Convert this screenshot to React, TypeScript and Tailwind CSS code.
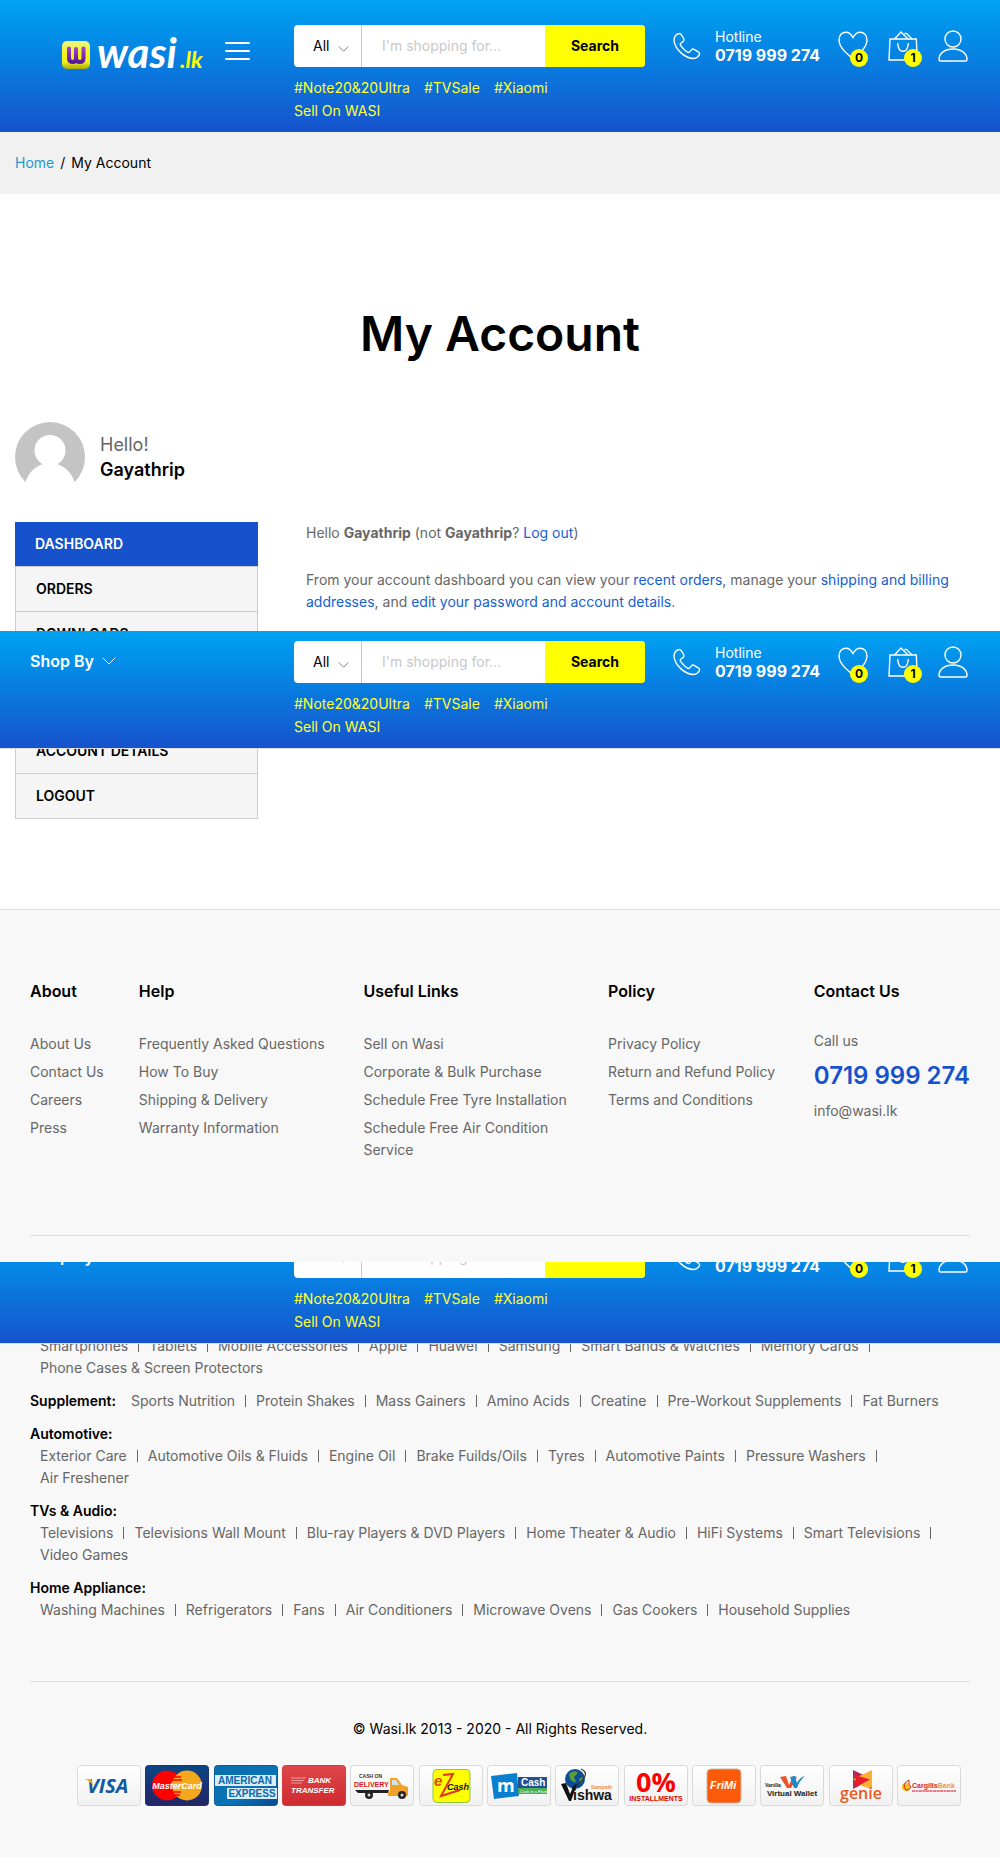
import type { ReactNode } from "react";

const HEADER_BG = "bg-linear-to-b from-[#00a3f2] to-[#1652cc]";

function Chevron({ className }: { className: string }) {
  return (
    <svg viewBox="0 0 14 8" className={className} fill="none" stroke="currentColor" aria-hidden="true">
      <path d="M1 1 L7 7 L13 1" strokeLinecap="round" strokeLinejoin="round" />
    </svg>
  );
}

function PhoneIcon() {
  return (
    <svg viewBox="0 0 28 28" className="h-7 w-7 shrink-0" fill="none" stroke="currentColor" strokeWidth="1.4" aria-hidden="true">
      <path d="M6.5 1.5C4 1.5 1 4 1 8C1.5 17 12 26.5 20.5 26.5C24 26.5 26.6 23.5 26.6 21.5C26.6 20.5 21 17 19.7 17C18 17 17.5 20.5 15.8 20.5C13.5 20.5 7.2 14 7.2 12C7.2 10.5 11 10 11 8C11 6.5 7.8 1.5 6.5 1.5Z" />
    </svg>
  );
}

function HeartIcon() {
  return (
    <svg viewBox="0 0 30 30" className="h-[30px] w-[30px]" fill="none" stroke="currentColor" strokeWidth="1.4" aria-hidden="true">
      <path d="M15 6.5C13 2.8 10.5 1.2 8 1.2C4 1.2 1 4.3 1 9C1 16 8 22 15 28C22 22 29 16 29 9C29 4.3 26 1.2 22 1.2C19.5 1.2 17 2.8 15 6.5Z" />
    </svg>
  );
}

function BagIcon() {
  return (
    <svg viewBox="0 0 30 30" className="h-[30px] w-[30px]" fill="none" stroke="currentColor" strokeWidth="1.4" aria-hidden="true">
      <path d="M2 8H28.3L29.3 29H1Z" />
      <path d="M6.5 8L13 1L20 8M16.5 2.5H18.5L24 8M15 3L20 8" />
      <path d="M9.7 12C10 17.2 12 20.3 15 20.3S20 17.2 20.4 12" />
    </svg>
  );
}

function UserIcon() {
  return (
    <svg viewBox="0 0 30 32" className="h-8 w-[30px]" fill="none" stroke="currentColor" strokeWidth="1.4" aria-hidden="true">
      <circle cx="15" cy="9" r="8" />
      <path d="M1 29.5C1 23 7 19 15 19S29 23 29 29.5C29 30.4 28.4 31 27.5 31H2.5C1.6 31 1 30.4 1 29.5Z" />
    </svg>
  );
}

function Badge({ side, children }: { side: string; children: ReactNode }) {
  return (
    <span className={`absolute -bottom-1.5 flex h-[18px] w-[18px] items-center justify-center rounded-full bg-[#ffff00] text-[12px] font-bold text-black ${side}`}>
      {children}
    </span>
  );
}

function Logo() {
  return (
    <a href="#home" aria-label="wasi.lk" className="block w-36 shrink-0">
      <svg viewBox="0 0 144 42" className="h-[42px] w-36 overflow-visible">
        <defs>
          <linearGradient id="tile" x1="0" y1="0" x2="0" y2="1">
            <stop offset="0" stopColor="#eef68a" />
            <stop offset="0.5" stopColor="#f4f018" />
            <stop offset="0.75" stopColor="#f0f020" />
            <stop offset="1" stopColor="#a8a80a" />
          </linearGradient>
          <linearGradient id="mark" x1="0" y1="0" x2="0" y2="1">
            <stop offset="0" stopColor="#a040c8" />
            <stop offset="1" stopColor="#5a189a" />
          </linearGradient>
        </defs>
        <rect x="1" y="11" width="28" height="28" rx="5" fill="url(#tile)" />
        <path d="M8 18.500V28Q8 32 12 32Q15 32 15 28V19M15 28Q15 32 19 32Q22.500 32 22.500 28V18.500" fill="none" stroke="url(#mark)" strokeWidth="4" strokeLinecap="round" />
        <text x="36" y="38" fill="#fff" fontSize="42" fontWeight="700" fontStyle="italic" fontFamily="Lato,sans-serif">wasi</text>
        <text x="119" y="38" fill="#ffff00" fontSize="23" fontWeight="700" fontStyle="italic" fontFamily="Lato,sans-serif">.lk</text>
      </svg>
    </a>
  );
}

const TAGS = ["#Note20&20Ultra", "#TVSale", "#Xiaomi", "Sell On WASI"];

function HeaderBar({ sticky = false }: { sticky?: boolean }) {
  return (
    <div className={`flex w-full shrink-0 items-start pr-8 pb-2.5 text-white ${sticky ? "pt-2.5" : "pt-[25px]"} ${HEADER_BG}`}>
      <div className="w-[294px] shrink-0">
        {sticky ? (
          <button type="button" className="ml-[30px] flex h-10 items-center gap-2 text-[16px] font-semibold">
            Shop By
            <Chevron className="h-2 w-3.5" />
          </button>
        ) : (
          <div className="flex h-[52px] items-center gap-5 pl-[61px]">
            <Logo />
            <button type="button" aria-label="Menu" className="flex w-[25px] flex-col gap-1.5">
              <span className="h-0.5 w-full rounded-full bg-white" />
              <span className="h-0.5 w-full rounded-full bg-white" />
              <span className="h-0.5 w-full rounded-full bg-white" />
            </button>
          </div>
        )}
      </div>

      <div className="min-w-0 flex-1">
        <form className="flex h-[42px] overflow-hidden rounded-[4px] bg-white" onSubmit={(e) => e.preventDefault()}>
          <div className="relative w-[68px] shrink-0 border-r border-[#c8c8c8] text-black">
            <select aria-label="Category" className="h-full w-full appearance-none bg-transparent pl-[19px] text-[14px] outline-none">
              <option>All</option>
            </select>
            <Chevron className="pointer-events-none absolute top-[21px] right-3 h-1.5 w-[11px] text-[#555]" />
          </div>
          <input type="text" aria-label="Search products" placeholder="I'm shopping for..." className="min-w-0 flex-1 px-5 text-[14px] text-black outline-none placeholder:text-[#c8c8c8]" />
          <button type="submit" className="w-[100px] shrink-0 bg-[#ffff00] text-[14px] font-bold text-black">Search</button>
        </form>
        <div className="mt-[9px] flex max-w-[300px] flex-wrap gap-x-3.5 text-[14px] leading-[23px] text-[#ffff33]">
          {TAGS.map((t) => (
            <a key={t} href="#tag">{t}</a>
          ))}
        </div>
      </div>

      <div className="ml-7 flex h-[42px] shrink-0 items-center">
        <PhoneIcon />
        <div className="ml-3.5 w-[123px] whitespace-nowrap">
          <div className="text-[14px] leading-[18px]">Hotline</div>
          <div className="text-[16px] leading-[18px] font-bold">0719 999 274</div>
        </div>
        <div className="flex items-center gap-5">
          <a href="#wishlist" aria-label="Wishlist" className="relative block">
            <HeartIcon />
            <Badge side="right-0">0</Badge>
          </a>
          <a href="#cart" aria-label="Cart" className="relative block">
            <BagIcon />
            <Badge side="-right-1">1</Badge>
          </a>
          <a href="#account" aria-label="Account" className="block">
            <UserIcon />
          </a>
        </div>
      </div>
    </div>
  );
}

const MENU = [
  { name: "Orders", height: "h-11" },
  { name: "Downloads", height: "h-11" },
  { name: "Addresses", height: "h-[71px]" },
  { name: "Account details", height: "h-11" },
  { name: "Logout", height: "h-11" },
];

function Sidebar() {
  return (
    <nav className="w-[243px] shrink-0 text-[14px] font-semibold uppercase">
      <a href="#dashboard" className="flex h-11 items-center bg-[#1652cc] pl-5 text-white">Dashboard</a>
      <ul className="border border-[#ccc] bg-[#f5f5f5] text-black">
        {MENU.map((m) => (
          <li key={m.name} className="border-b border-[#ccc] last:border-b-0">
            <a href="#menu" className={`flex items-center pl-5 ${m.height}`}>{m.name}</a>
          </li>
        ))}
      </ul>
    </nav>
  );
}

const COLUMNS = [
  { title: "About", links: ["About Us", "Contact Us", "Careers", "Press"] },
  { title: "Help", links: ["Frequently Asked Questions", "How To Buy", "Shipping & Delivery", "Warranty Information"] },
  { title: "Useful Links", links: ["Sell on Wasi", "Corporate & Bulk Purchase", "Schedule Free Tyre Installation", "Schedule Free Air Condition Service"] },
  { title: "Policy", links: ["Privacy Policy", "Return and Refund Policy", "Terms and Conditions"] },
];

const CATEGORIES = [
  { title: "", inline: false, links: ["Smartphones", "Tablets", "Mobile Accessories", "Apple", "Huawei", "Samsung", "Smart Bands & Watches", "Memory Cards", "Phone Cases & Screen Protectors"] },
  { title: "Supplement:", inline: true, links: ["Sports Nutrition", "Protein Shakes", "Mass Gainers", "Amino Acids", "Creatine", "Pre-Workout Supplements", "Fat Burners"] },
  { title: "Automotive:", inline: false, links: ["Exterior Care", "Automotive Oils & Fluids", "Engine Oil", "Brake Fuilds/Oils", "Tyres", "Automotive Paints", "Pressure Washers", "Air Freshener"] },
  { title: "TVs & Audio:", inline: false, links: ["Televisions", "Televisions Wall Mount", "Blu-ray Players & DVD Players", "Home Theater & Audio", "HiFi Systems", "Smart Televisions", "Video Games"] },
  { title: "Home Appliance:", inline: false, links: ["Washing Machines", "Refrigerators", "Fans", "Air Conditioners", "Microwave Ovens", "Gas Cookers", "Household Supplies"] },
];

const SANS = "'Liberation Sans',sans-serif";

function Card({ label, fill = "url(#paper)", edge = "#d9d9d9", children }: { label: string; fill?: string; edge?: string; children: ReactNode }) {
  return (
    <svg viewBox="0 0 64 41" className="h-[41px] w-16" role="img" aria-label={label}>
      <rect x="0.5" y="0.5" width="63" height="40" rx="3" fill={fill} stroke={edge} />
      {children}
    </svg>
  );
}

function PaymentCards() {
  return (
    <div className="mt-[25px] flex flex-wrap justify-between gap-y-2 pr-[9px] pl-[47px]">
      <svg className="absolute h-0 w-0" aria-hidden="true">
        <defs>
          <linearGradient id="paper" x1="0" y1="0" x2="0" y2="1"><stop offset="0" stopColor="#fff" /><stop offset="1" stopColor="#f1f1f1" /></linearGradient>
          <linearGradient id="navy" x1="0" y1="0" x2="0" y2="1"><stop offset="0" stopColor="#0b4684" /><stop offset="1" stopColor="#232466" /></linearGradient>
          <linearGradient id="amex" x1="0" y1="0" x2="1" y2="1"><stop offset="0" stopColor="#0a6fae" /><stop offset="0.6" stopColor="#0a72b5" /><stop offset="1" stopColor="#07488c" /></linearGradient>
          <linearGradient id="red" x1="0" y1="0" x2="0" y2="1"><stop offset="0" stopColor="#e0474c" /><stop offset="1" stopColor="#cd2a2e" /></linearGradient>
        </defs>
      </svg>
      <Card label="Visa">
        <text x="10" y="28" fontSize="20" fontWeight="700" fontStyle="italic" fill="#0f5aa0" fontFamily="'Open Sans',sans-serif">VISA</text>
        <path d="M8 14H14L16.500 21Q13 16 8 14Z" fill="#f7a823" />
      </Card>
      <Card label="MasterCard" fill="url(#navy)" edge="#1c3468">
        <circle cx="22" cy="20.500" r="15" fill="#f00" />
        <circle cx="42" cy="20.500" r="15" fill="#f6a81c" />
        <path d="M29 12H36M28 15H37M27 27H36M29 30H35" stroke="#f00" strokeWidth="1.500" />
        <text x="32" y="24" textAnchor="middle" fontSize="9" fontWeight="700" fontStyle="italic" fill="#fff" fontFamily={SANS}>MasterCard</text>
      </Card>
      <Card label="American Express" fill="url(#amex)" edge="#0a5c9c">
        <rect x="1" y="10" width="61" height="11" fill="#d9ecf8" />
        <rect x="13" y="23" width="50" height="11" fill="#d9ecf8" />
        <text x="31" y="19" textAnchor="middle" fontSize="10" fontWeight="700" fill="#0869ac" fontFamily={SANS}>AMERICAN</text>
        <text x="38" y="32" textAnchor="middle" fontSize="10" fontWeight="700" fill="#0869ac" fontFamily={SANS}>EXPRESS</text>
      </Card>
      <Card label="Bank transfer" fill="url(#red)" edge="#d63b40">
        <path d="M9 13H24M9 15.500H22M9 18H20" stroke="#f5b5b6" strokeWidth="0.800" />
        <text x="26" y="18" fontSize="8" fontWeight="700" fontStyle="italic" fill="#fff" fontFamily={SANS}>BANK</text>
        <text x="9" y="28" fontSize="8" fontWeight="700" fontStyle="italic" fill="#fff" fontFamily={SANS}>TRANSFER</text>
      </Card>
      <Card label="Cash on delivery">
        <text x="9" y="13" fontSize="5" fontWeight="700" fill="#333" fontFamily={SANS}>CASH ON</text>
        <text x="4" y="22" fontSize="7" fontWeight="700" fill="#d81820" fontFamily={SANS}>DELIVERY</text>
        <path d="M5 25H39V28H8Z" fill="#222" />
        <path d="M40 13H47L52 20L58 22V31H38V26H40Z" fill="#f0a12a" />
        <path d="M42 15H46L49 20H42Z" fill="#cfe4ea" />
        <circle cx="19" cy="30" r="4" fill="#222" /><circle cx="19" cy="30" r="1.500" fill="#ddd" />
        <circle cx="52" cy="30" r="4" fill="#222" /><circle cx="52" cy="30" r="1.500" fill="#ddd" />
      </Card>
      <Card label="eZ Cash">
        <rect x="14" y="4.500" width="37" height="33" rx="4" fill="#ff0" stroke="#8fc540" />
        <text x="15" y="21" fontSize="15" fontWeight="700" fontStyle="italic" fill="#e8401c" fontFamily={SANS}>e</text>
        <path d="M24 10L34 9L22 31L41 25" fill="none" stroke="#e8301c" strokeWidth="2" />
        <text x="28" y="25" fontSize="9" fontWeight="700" fontStyle="italic" fill="#111" fontFamily={SANS}>Cash</text>
      </Card>
      <Card label="mCash">
        <path d="M4 11L30 8L32 31L7 34Z" fill="#0a7fd0" />
        <rect x="31" y="12" width="29" height="11" fill="#1f4f96" />
        <rect x="31" y="23" width="29" height="6" fill="#4bae4f" />
        <text x="10" y="27" fontSize="18" fontWeight="700" fill="#fff" fontFamily="'Open Sans',sans-serif">m</text>
        <text x="34" y="21" fontSize="10" fontWeight="700" fill="#fff" fontFamily={SANS}>Cash</text>
        <text x="33" y="27.500" fontSize="4" fill="#fff" fontFamily={SANS}>Cash in a Flash</text>
      </Card>
      <Card label="Sampath Vishwa">
        <circle cx="20" cy="14" r="10" fill="#0d4d94" />
        <path d="M14 9Q19 4 23 8L19 12L21 17Q15 18 14 9ZM24 14L28 12L26 19Z" fill="#5c9c38" />
        <path d="M26 4Q38 9 17 24" fill="none" stroke="#333" strokeWidth="1.200" />
        <path d="M6 19L11 18L15 29L19 20L22 19L16 36H14Z" fill="#111" />
        <text x="36" y="24" fontSize="5" fontWeight="700" fill="#f08a3c" fontFamily={SANS}>Sampath</text>
        <text x="18" y="35" fontSize="14" fontWeight="700" fill="#151515" fontFamily={SANS}>ishwa</text>
      </Card>
      <Card label="0% installments">
        <text x="32" y="27" textAnchor="middle" fontSize="27" fontWeight="700" fill="#f00" fontFamily="'Open Sans',sans-serif">0%</text>
        <text x="32" y="36" textAnchor="middle" fontSize="7" fontWeight="700" fill="#e80000" fontFamily={SANS}>INSTALLMENTS</text>
      </Card>
      <Card label="FriMi">
        <rect x="15" y="4" width="34" height="34" rx="4" fill="#fb5a08" stroke="#c9b5a8" />
        <text x="18" y="24" fontSize="11" fontStyle="italic" fontWeight="700" fill="#fff" fontFamily={SANS}>FriMi</text>
      </Card>
      <Card label="Vanilla Virtual Wallet">
        <path d="M20 12L26 11L29 20L33 11L37 12L31 23H27Z" fill="#e8532a" />
        <path d="M30 12L35 11L37 18Q40 12 45 11Q39 16 37 23H34Z" fill="#2089c9" />
        <text x="5" y="22" fontSize="5" fontWeight="700" fill="#222" fontFamily={SANS}>Vanilla</text>
        <text x="32" y="31" textAnchor="middle" fontSize="8" fontWeight="700" fill="#222" fontFamily={SANS}>Virtual Wallet</text>
      </Card>
      <Card label="genie">
        <path d="M24 5L43 14L24 24Z" fill="#b32a52" />
        <path d="M43 5V24L33 21L24 14Z" fill="#fbb034" />
        <path d="M26 10L41 14.500L27 22Z" fill="#e81c2c" />
        <text x="32" y="34" textAnchor="middle" fontSize="16" fontWeight="600" fill="#ea5a20" fontFamily="'Open Sans',sans-serif">genie</text>
      </Card>
      <Card label="Cargills Bank">
        <circle cx="9" cy="22" r="4" fill="#f6c21c" />
        <path d="M9 25Q4 19 12 15Q11 20 14 22Q12 26 9 25Z" fill="none" stroke="#d8202c" />
        <text x="15" y="23" fontSize="7" fontWeight="700" fill="#dc1f2b" fontFamily={SANS}>Cargills<tspan fill="#f39a1c">Bank</tspan></text>
        <path d="M15 26H59" stroke="#e2545c" strokeWidth="1.500" strokeDasharray="3 0.500" />
      </Card>
    </div>
  );
}

export default function App() {
  return (
    <div className="relative min-h-screen bg-white font-['Inter',sans-serif] text-[14px] leading-[22px] text-[#666]">
      <header>
        <HeaderBar />
      </header>

      <nav aria-label="Breadcrumb" className="flex h-[62px] items-center gap-1.5 bg-[#f1f1f1] px-[15px] text-black">
        <a href="#home" className="text-[#1b9bd0]">Home</a>
        <span>/</span>
        <span>My Account</span>
      </nav>

      <main className="px-[15px] pb-[90px]">
        <h1 className="pt-[111px] text-center text-[48px] leading-[58px] font-semibold text-black">My Account</h1>

        <div className="mt-[59px] flex items-center gap-[15px]">
          <svg viewBox="0 0 70 70" className="h-[70px] w-[70px]" role="img" aria-label="Avatar">
            <circle cx="35" cy="35" r="35" fill="#c4c4c4" />
            <circle cx="35" cy="28.500" r="15.500" fill="#fff" />
            <path d="M10 61C14 48 24 41 35 41S56 48 60 61L52 71H18Z" fill="#fff" />
          </svg>
          <div className="text-[18px] leading-[25px]">
            <div>Hello!</div>
            <div className="font-semibold text-black">Gayathrip</div>
          </div>
        </div>

        <div className="mt-[30px] flex items-start gap-12">
          <Sidebar />
          <div className="min-w-0 flex-1">
            <p>
              Hello <strong>Gayathrip</strong> (not <strong>Gayathrip</strong>? <a href="#logout" className="text-[#1560cf]">Log out</a>)
            </p>
            <p className="mt-[25px]">
              From your account dashboard you can view your <a href="#orders" className="text-[#1560cf]">recent orders</a>, manage your{" "}
              <a href="#addresses" className="text-[#1560cf]">shipping and billing addresses</a>, and{" "}
              <a href="#details" className="text-[#1560cf]">edit your password and account details</a>.
            </p>
          </div>
        </div>
      </main>

      <footer className="border-t border-[#ddd] bg-[#f8f8f8] px-[30px] pt-[69px] pb-[51px]">
        <div className="grid grid-cols-[109fr_225fr_245fr_206fr_155fr] border-b border-[#ddd] pb-[74px]">
          {COLUMNS.map((c) => (
            <section key={c.title} className="pr-6">
              <h2 className="text-[16px] leading-6 font-semibold text-black">{c.title}</h2>
              <ul className="mt-[30px] flex flex-col gap-1.5">
                {c.links.map((l) => (
                  <li key={l}><a href="#link">{l}</a></li>
                ))}
              </ul>
            </section>
          ))}
          <section className="whitespace-nowrap">
            <h2 className="text-[16px] leading-6 font-semibold text-black">Contact Us</h2>
            <p className="mt-[27px]">Call us</p>
            <p className="text-[24px] leading-[48px] font-semibold text-[#1652cc]">0719 999 274</p>
            <p>info@wasi.lk</p>
          </section>
        </div>

        <div className="flex flex-col gap-[11px] border-b border-[#ddd] pt-[99px] pb-[60px]">
          {CATEGORIES.map((c) => (
            <div key={c.links[0]} className={c.inline ? "flex items-start" : "block"}>
              {c.title && <h3 className={c.inline ? "mr-[5px] shrink-0 font-semibold text-black" : "font-semibold text-black"}>{c.title}</h3>}
              <ul className="flex flex-wrap">
                {c.links.map((l, i) => (
                  <li key={l} className="flex items-center">
                    <a href="#category" className="px-2.5">{l}</a>
                    {i < c.links.length - 1 && <span className="h-3 w-px bg-[#666]" />}
                  </li>
                ))}
              </ul>
            </div>
          ))}
        </div>

        <p className="mt-9 text-center text-black">© Wasi.lk 2013 - 2020 - All Rights Reserved.</p>
        <PaymentCards />
      </footer>

      <div className="absolute inset-x-0 top-[631px] border-b border-[#ddd]">
        <HeaderBar sticky />
      </div>
      <div className="absolute inset-x-0 top-[1262px] flex h-[82px] flex-col justify-end overflow-hidden border-b border-[#ddd]">
        <HeaderBar sticky />
      </div>
    </div>
  );
}
